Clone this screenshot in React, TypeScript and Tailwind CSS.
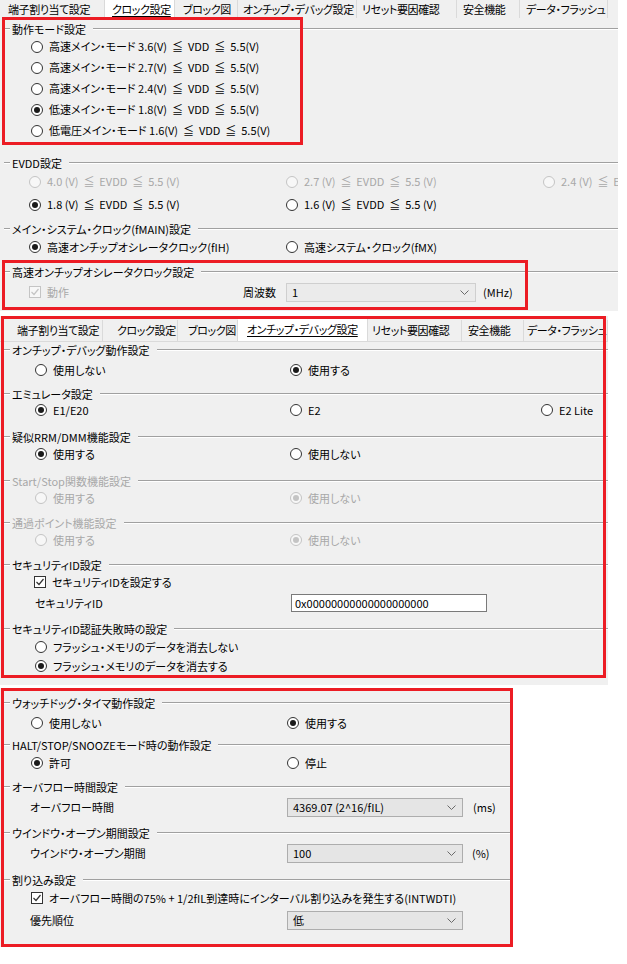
import React from "react";

type OptProps = { label: string; on?: boolean; dis?: boolean; box?: boolean };

const line = "h-[2px] border-t border-t-[#a0a0a0] border-b border-b-white";

const Radio = ({ on, dis }: { on?: boolean; dis?: boolean }) => (
  <span
    className={`flex items-center justify-center w-[12px] h-[12px] rounded-full border shrink-0 ${
      dis ? "border-[#c4c4c4] bg-[#f7f7f7]" : "border-[#333333] bg-white"
    }`}
  >
    {on && <span className={`w-[6px] h-[6px] rounded-full ${dis ? "bg-[#c4c4c4]" : "bg-[#1a1a1a]"}`} />}
  </span>
);

const Check = ({ dis }: { dis?: boolean }) => (
  <span
    className={`flex items-center justify-center w-[12px] h-[12px] border shrink-0 ${
      dis ? "border-[#c4c4c4] bg-[#f7f7f7]" : "border-[#333333] bg-white"
    }`}
  >
    <svg width="10" height="10" viewBox="0 0 10 10">
      <polyline points="1.5,5 4,7.5 8.5,2" fill="none" stroke={dis ? "#c4c4c4" : "#333"} strokeWidth="1.2" />
    </svg>
  </span>
);

const Opt = ({ label, on, dis, box }: OptProps) => (
  <span className="flex items-center gap-[6px] whitespace-pre">
    {box ? <Check dis={dis} /> : <Radio on={on} dis={dis} />}
    <span className={dis ? "text-[#a8a8a8]" : "text-black"}>{label}</span>
  </span>
);

const Head = ({ t, dis, cls = "" }: { t: string; dis?: boolean; cls?: string }) => (
  <div className={`flex items-center h-[14px] ${cls}`}>
    <span className={`w-[6px] ml-[4px] ${line}`} />
    <span className={`px-[2px] whitespace-nowrap ${dis ? "text-[#a8a8a8]" : ""}`}>{t}</span>
    <span className={`flex-1 ml-[5px] ${line}`} />
  </div>
);

const Sel = ({ v, cls, dis }: { v: string; cls: string; dis?: boolean }) => (
  <div
    className={`flex items-center h-[19px] border pl-[5px] pr-[6px] ${cls} ${
      dis ? "border-[#cfcfcf] bg-[#ebebeb]" : "border-[#adadad] bg-[#e5e5e5]"
    }`}
  >
    <span className="flex-1 whitespace-pre">{v}</span>
    <svg width="9" height="5" viewBox="0 0 9 5">
      <polyline points="0.5,0.5 4.5,4.5 8.5,0.5" fill="none" stroke="#6a6a6a" />
    </svg>
  </div>
);

type Tab = { l: string; cls: string; sel?: boolean };

const Tabs = ({ tabs, cls }: { tabs: Tab[]; cls: string }) => (
  <div className={`flex shrink-0 ${cls}`}>
    {tabs.map((t) => (
      <div
        key={t.l}
        className={`flex items-center whitespace-nowrap overflow-hidden border-r border-[#dadada] tracking-[-0.4px] ${t.cls} ${
          t.sel ? "bg-white" : ""
        }`}
      >
        <span className={t.sel ? "underline underline-offset-2" : ""}>{t.l}</span>
      </div>
    ))}
  </div>
);

const modes = [
  "高速メイン・モード 3.6(V)  ≦  VDD  ≦  5.5(V)",
  "高速メイン・モード 2.7(V)  ≦  VDD  ≦  5.5(V)",
  "高速メイン・モード 2.4(V)  ≦  VDD  ≦  5.5(V)",
  "低速メイン・モード 1.8(V)  ≦  VDD  ≦  5.5(V)",
  "低電圧メイン・モード 1.6(V)  ≦  VDD  ≦  5.5(V)",
];

const Panel1 = () => (
  <div className="w-[618px] h-[311px] bg-[#f0f0f0] flex flex-col overflow-hidden">
    <Tabs
      cls="h-[18px]"
      tabs={[
        { l: "端子割り当て設定", cls: "w-[105px] pl-[8px]" },
        { l: "クロック設定", cls: "w-[70px] pl-[7px]", sel: true },
        { l: "ブロック図", cls: "w-[63px] pl-[8px]" },
        { l: "オンチップ・デバッグ設定", cls: "w-[119px] pl-[5px]" },
        { l: "リセット要因確認", cls: "w-[100px] pl-[5px]" },
        { l: "安全機能", cls: "w-[63px] pl-[6px]" },
        { l: "データ・フラッシュ", cls: "w-[88px] pl-[6px]" },
      ]}
    />
    <Head t="動作モード設定" cls="mt-[4px]" />
    {modes.map((m, i) => (
      <div key={m} className="flex items-center h-[21px] pl-[31px]">
        <Opt label={m} on={i === 3} />
      </div>
    ))}
    <Head t="EVDD設定" cls="mt-[15px]" />
    <div className="flex items-center h-[23px] pl-[29px] whitespace-nowrap">
      <div className="w-[257px] shrink-0"><Opt dis label="4.0 (V)  ≦  EVDD  ≦  5.5 (V)" /></div>
      <div className="w-[257px] shrink-0"><Opt dis label="2.7 (V)  ≦  EVDD  ≦  5.5 (V)" /></div>
      <div className="shrink-0"><Opt dis label="2.4 (V)  ≦  EVDD  ≦  5.5 (V)" /></div>
    </div>
    <div className="flex items-center h-[23px] pl-[29px]">
      <div className="w-[257px] shrink-0"><Opt on label="1.8 (V)  ≦  EVDD  ≦  5.5 (V)" /></div>
      <div><Opt label="1.6 (V)  ≦  EVDD  ≦  5.5 (V)" /></div>
    </div>
    <Head t="メイン・システム・クロック(fMAIN)設定" cls="mt-[6px]" />
    <div className="flex items-center h-[22px] pl-[29px]">
      <div className="w-[257px] shrink-0"><Opt on label="高速オンチップオシレータクロック(fIH)" /></div>
      <div><Opt label="高速システム・クロック(fMX)" /></div>
    </div>
    <Head t="高速オンチップオシレータクロック設定" cls="mt-[7px]" />
    <div className="flex items-center h-[26px] pl-[29px]">
      <div className="w-[257px] shrink-0 flex items-center">
        <Opt box dis label="動作" />
        <span className="ml-auto pr-[10px]">周波数</span>
      </div>
      <Sel dis v="1" cls="w-[190px]" />
      <span className="ml-[7px]">(MHz)</span>
    </div>
  </div>
);

const Panel2 = () => (
  <div className="mt-[5px] w-[608px] h-[369px] bg-[#f0f0f0] flex flex-col pt-[2px] overflow-hidden">
    <Tabs
      cls="h-[24px] pl-[6px] border-b border-[#dadada]"
      tabs={[
        { l: "端子割り当て設定", cls: "w-[97px] pl-[11px] mt-[2px]" },
        { l: "クロック設定", cls: "w-[75px] pl-[14px] mt-[2px]" },
        { l: "ブロック図", cls: "w-[60px] pl-[10px] mt-[2px]" },
        { l: "オンチップ・デバッグ設定", cls: "w-[130px] pl-[9px]", sel: true },
        { l: "リセット要因確認", cls: "w-[94px] pl-[4px] mt-[2px]" },
        { l: "安全機能", cls: "w-[62px] pl-[6px] mt-[2px]" },
        { l: "データ・フラッシュ", cls: "w-[84px] pl-[3px] mt-[2px]" },
      ]}
    />
    <Head t="オンチップ・デバッグ動作設定" cls="mt-[1px]" />
    <div className="flex items-center h-[18px] mt-[4px] pl-[35px]">
      <div className="w-[255px] shrink-0"><Opt label="使用しない" /></div>
      <Opt on label="使用する" />
    </div>
    <Head t="エミュレータ設定" cls="mt-[8px]" />
    <div className="flex items-center h-[18px] pl-[35px]">
      <div className="w-[255px] shrink-0"><Opt on label="E1/E20" /></div>
      <div className="w-[251px] shrink-0"><Opt label="E2" /></div>
      <Opt label="E2 Lite" />
    </div>
    <Head t="疑似RRM/DMM機能設定" cls="mt-[11px]" />
    <div className="flex items-center h-[18px] mt-[1px] pl-[35px]">
      <div className="w-[255px] shrink-0"><Opt on label="使用する" /></div>
      <Opt label="使用しない" />
    </div>
    <Head dis t="Start/Stop関数機能設定" cls="mt-[11px]" />
    <div className="flex items-center h-[18px] mt-[1px] pl-[35px]">
      <div className="w-[255px] shrink-0"><Opt dis label="使用する" /></div>
      <Opt dis on label="使用しない" />
    </div>
    <Head dis t="通過ポイント機能設定" cls="mt-[9px]" />
    <div className="flex items-center h-[18px] mt-[1px] pl-[35px]">
      <div className="w-[255px] shrink-0"><Opt dis label="使用する" /></div>
      <Opt dis on label="使用しない" />
    </div>
    <Head t="セキュリティID設定" cls="mt-[9px]" />
    <div className="flex items-center h-[18px] mt-[1px] pl-[34px]">
      <Opt box label="セキュリティIDを設定する" />
    </div>
    <div className="flex items-center h-[20px] mt-[2px] pl-[35px]">
      <div className="w-[256px] shrink-0">セキュリティID</div>
      <div className="w-[196px] h-[18px] flex items-center border border-[#7a7a7a] bg-white pl-[3px]">
        0x00000000000000000000
      </div>
    </div>
    <Head t="セキュリティID認証失敗時の設定" cls="mt-[9px]" />
    <div className="flex items-center h-[18px] mt-[2px] pl-[35px]">
      <Opt label="フラッシュ・メモリのデータを消去しない" />
    </div>
    <div className="flex items-center h-[18px] mt-[1px] pl-[35px]">
      <Opt on label="フラッシュ・メモリのデータを消去する" />
    </div>
  </div>
);

const Panel3 = () => (
  <div className="mt-[3px] w-[512px] h-[259px] bg-[#f0f0f0] flex flex-col pt-[8px] overflow-hidden">
    <Head t="ウォッチドッグ・タイマ動作設定" />
    <div className="flex items-center h-[18px] mt-[4px] pl-[31px]">
      <div className="w-[256px] shrink-0"><Opt label="使用しない" /></div>
      <Opt on label="使用する" />
    </div>
    <Head t="HALT/STOP/SNOOZEモード時の動作設定" cls="mt-[6px]" />
    <div className="flex items-center h-[18px] mt-[2px] pl-[31px]">
      <div className="w-[256px] shrink-0"><Opt on label="許可" /></div>
      <Opt label="停止" />
    </div>
    <Head t="オーバフロー時間設定" cls="mt-[8px]" />
    <div className="flex items-center h-[19px] mt-[4px] pl-[30px]">
      <div className="w-[257px] shrink-0">オーバフロー時間</div>
      <Sel v="4369.07 (2^16/fIL)" cls="w-[176px]" />
      <span className="ml-[10px]">(ms)</span>
    </div>
    <Head t="ウインドウ・オープン期間設定" cls="mt-[9px]" />
    <div className="flex items-center h-[20px] mt-[3px] pl-[30px]">
      <div className="w-[257px] shrink-0">ウインドウ・オープン期間</div>
      <Sel v="100" cls="w-[176px]" />
      <span className="ml-[9px]">(%)</span>
    </div>
    <Head t="割り込み設定" cls="mt-[10px]" />
    <div className="flex items-center h-[18px] mt-[2px] pl-[31px]">
      <Opt box label="オーバフロー時間の75% + 1/2fIL到達時にインターバル割り込みを発生する(INTWDTI)" />
    </div>
    <div className="flex items-center h-[19px] mt-[4px] pl-[30px]">
      <div className="w-[257px] shrink-0">優先順位</div>
      <Sel v="低" cls="w-[176px]" />
    </div>
  </div>
);

export default function App() {
  return (
    <div className="relative w-[627px] h-[964px] bg-white overflow-hidden text-[11px] leading-none text-black font-['Noto_Sans_CJK_JP','Noto_Sans',sans-serif] [font-feature-settings:'palt']">
      <Panel1 />
      <Panel2 />
      <Panel3 />
      <div className="absolute left-[2px] top-[17px] w-[301px] h-[128px] border-[3px] border-[#ec1c24]" />
      <div className="absolute left-[2px] top-[260px] w-[526px] h-[50px] border-[3px] border-[#ec1c24]" />
      <div className="absolute left-[1px] top-[316px] w-[605px] h-[362px] border-[3px] border-[#ec1c24]" />
      <div className="absolute left-[1px] top-[688px] w-[512px] h-[259px] border-[3px] border-[#ec1c24]" />
    </div>
  );
}
